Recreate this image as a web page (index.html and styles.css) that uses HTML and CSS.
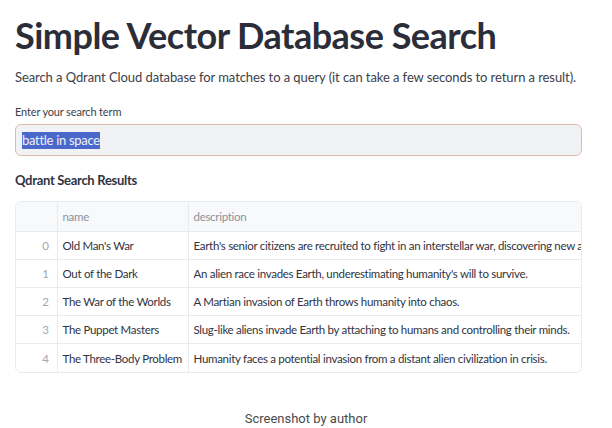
FILE: index.html
```html
<!DOCTYPE html>
<html>
<head>
<meta charset="utf-8">
<link rel="stylesheet" href="styles.css">
</head>
<body>
<main class="app">
  <h1 class="title">Simple Vector Database Search</h1>
  <p class="intro">Search a Qdrant Cloud database for matches to a query (it can take a few seconds to return a result).</p>
  <label class="label">Enter your search term</label>
  <div class="input"><span class="sel">battle in space</span></div>
  <h3 class="subhead">Qdrant Search Results</h3>
  <div class="grid">
    <table class="tbl">
      <colgroup><col class="c-idx"><col class="c-name"><col></colgroup>
      <thead>
        <tr><th></th><th>name</th><th>description</th></tr>
      </thead>
      <tbody>
        <tr><td class="idx">0</td><td>Old Man's War</td><td>Earth's senior citizens are recruited to fight in an interstellar war, discovering new abilities.</td></tr>
        <tr><td class="idx">1</td><td>Out of the Dark</td><td>An alien race invades Earth, underestimating humanity's will to survive.</td></tr>
        <tr><td class="idx">2</td><td>The War of the Worlds</td><td>A Martian invasion of Earth throws humanity into chaos.</td></tr>
        <tr><td class="idx">3</td><td>The Puppet Masters</td><td>Slug-like aliens invade Earth by attaching to humans and controlling their minds.</td></tr>
        <tr><td class="idx">4</td><td>The Three-Body Problem</td><td>Humanity faces a potential invasion from a distant alien civilization in crisis.</td></tr>
      </tbody>
    </table>
  </div>
</main>
<footer class="caption">Screenshot by author</footer>
</body>
</html>
```
FILE: styles.css
```css
* { box-sizing: border-box; }
html, body { margin: 0; padding: 0; background: #fff; }
body { width: 612px; height: 428px; overflow: hidden; font-family: "Lato", "Noto Sans", sans-serif; color: #31333f; }
.app { padding: 13px 30px 0 15px; }
.title { font-size: 36px; font-weight: 700; margin: 0; line-height: 44px; color: #2b2d38; letter-spacing: -0.5px; }
.intro { font-size: 13px; margin: 11px 0 0; line-height: 18px; color: #3c3e49; letter-spacing: -0.08px; white-space: nowrap; }
.label { display: block; font-size: 11px; margin-top: 19px; line-height: 14px; color: #3c3e49; letter-spacing: -0.15px; }
.input { margin-top: 5px; height: 32px; border: 1px solid #dfb9a8; border-radius: 6px; background: #f0f2f6; padding: 0 6px; display: flex; align-items: center; font-size: 13px; letter-spacing: -0.3px; }
.sel { background: #4a68c9; color: #eef1fa; padding: 1px 0; line-height: 15px; }
.subhead { font-size: 13px; font-weight: 700; margin: 16px 0 0; line-height: 16px; color: #31333f; letter-spacing: -0.3px; }
.grid { margin-top: 13px; border: 1px solid #e9ebef; border-radius: 6px; overflow: hidden; }
.tbl { width: 100%; border-collapse: collapse; table-layout: fixed; font-size: 11.5px; letter-spacing: -0.3px; }
.c-idx { width: 41px; }
.c-name { width: 131px; }
.tbl th, .tbl td { height: 28.2px; padding: 0 5px; text-align: left; white-space: nowrap; overflow: hidden; border-right: 1px solid #e9ebef; border-bottom: 1px solid #e9ebef; }
.tbl th:last-child, .tbl td:last-child { border-right: none; padding-right: 0; }
.tbl tbody tr:last-child td { border-bottom: none; }
.tbl th { height: 29px; background: #f8f9fb; font-weight: 400; color: #8d919b; }
.tbl td { color: #31333f; }
.tbl td.idx { text-align: right; color: #a3a6ad; padding-right: 8px; }
.caption { position: absolute; left: 0; right: 0; top: 411px; text-align: center; font-family: "Roboto", "Liberation Sans", sans-serif; font-size: 13px; color: #4a4a4a; }
```
